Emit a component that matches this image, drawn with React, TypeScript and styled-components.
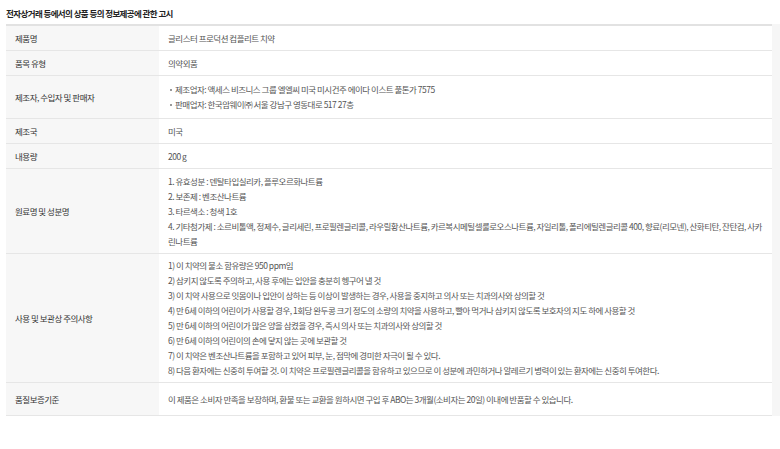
import React, { FC } from 'react';
import styled, { createGlobalStyle } from 'styled-components';

const GlobalStyle = createGlobalStyle`
  html, body {
    margin: 0;
    padding: 0;
    background: #fff;
  }
  body {
    font-family: 'Noto Sans CJK KR', 'Noto Sans', sans-serif;
    -webkit-font-smoothing: antialiased;
  }
`;

const Page = styled.div`
  width: 780px;
  height: 449px;
  padding: 6px 0 0 6px;
  box-sizing: border-box;
  overflow: hidden;
`;

const Title = styled.h3`
  margin: 0 0 4px;
  font-size: 8.5px;
  line-height: 14px;
  font-weight: 700;
  letter-spacing: -0.6px;
  color: #222;
`;

const Frame = styled.div`
  background: #f6f6f6;
  padding-right: 8px;
`;

const Table = styled.div`
  display: grid;
  grid-template-columns: 153px 1fr;
  background: #fff;
  border-top: 2px solid #e2e2e2;
`;

const Label = styled.div`
  display: flex;
  align-items: center;
  padding: 4px 0 4px 9px;
  background: #f7f7f7;
  border-bottom: 1px solid #e6e6e6;
  font-size: 8.5px;
  line-height: 15px;
  letter-spacing: -0.5px;
  color: #333;
`;

const Value = styled.div<{ $pad: number }>`
  display: flex;
  flex-direction: column;
  justify-content: center;
  padding: ${p => p.$pad}px 8px ${p => p.$pad}px 9px;
  border-bottom: 1px solid #e6e6e6;
  font-size: 8.5px;
  line-height: 15px;
  letter-spacing: -0.5px;
  color: #555;
  word-break: break-all;
`;

const Bullet = styled.div`
  position: relative;
  padding-left: 7px;

  &::before {
    content: '';
    position: absolute;
    left: 2px;
    top: 7px;
    width: 2px;
    height: 2px;
    border-radius: 50%;
    background: #777;
  }
`;

const Line = styled.div``;

type Row = { label: string; lines: string[]; bullets?: boolean; pad?: number };

const rows: Row[] = [
  { label: '제품명', lines: ['글리스터 프로덕션 컴플리트 치약'] },
  { label: '품목 유형', lines: ['의약외품'] },
  {
    label: '제조자, 수입자 및 판매자',
    bullets: true,
    pad: 6,
    lines: [
      '제조업자: 액세스 비즈니스 그룹 엘엘씨 미국 미시건주 에이다 이스트 풀톤가 7575',
      '판매업자: 한국암웨이㈜ 서울 강남구 영동대로 517 27층',
    ],
  },
  { label: '제조국', lines: ['미국'] },
  { label: '내용량', lines: ['200 g'] },
  {
    label: '원료명 및 성분명',
    lines: [
      '1. 유효성분 : 덴탈타입실리카, 플루오르화나트륨',
      '2. 보존제 : 벤조산나트륨',
      '3. 타르색소 : 청색 1호',
      '4. 기타첨가제 : 소르비톨액, 정제수, 글리세린, 프로필렌글리콜, 라우릴황산나트륨, 카르복시메틸셀룰로오스나트륨, 자일리톨, 폴리에틸렌글리콜 400, 향료(리모넨), 산화티탄, 잔탄검, 사카린나트륨',
    ],
  },
  {
    label: '사용 및 보관상 주의사항',
    pad: 4,
    lines: [
      '1) 이 치약의 불소 함유량은 950 ppm임',
      '2) 삼키지 않도록 주의하고, 사용 후에는 입안을 충분히 헹구어 낼 것',
      '3) 이 치약 사용으로 잇몸이나 입안이 상하는 등 이상이 발생하는 경우, 사용을 중지하고 의사 또는 치과의사와 상의할 것',
      '4) 만 6세 이하의 어린이가 사용할 경우, 1회당 완두콩 크기 정도의 소량의 치약을 사용하고, 빨아 먹거나 삼키지 않도록 보호자의 지도 하에 사용할 것',
      '5) 만 6세 이하의 어린이가 많은 양을 삼켰을 경우, 즉시 의사 또는 치과의사와 상의할 것',
      '6) 만 6세 이하의 어린이의 손에 닿지 않는 곳에 보관할 것',
      '7) 이 치약은 벤조산나트륨을 포함하고 있어 피부, 눈, 점막에 경미한 자극이 될 수 있다.',
      '8) 다음 환자에는 신중히 투여할 것. 이 치약은 프로필렌글리콜을 함유하고 있으므로 이 성분에 과민하거나 알레르기 병력이 있는 환자에는 신중히 투여한다.',
    ],
  },
  {
    label: '품질보증기준',
    pad: 8.5,
    lines: ['이 제품은 소비자 만족을 보장하며, 환불 또는 교환을 원하시면 구입 후 ABO는 3개월(소비자는 20일) 이내에 반품할 수 있습니다.'],
  },
];

const App: FC = () => (
  <>
    <GlobalStyle />
    <Page>
      <Title>전자상거래 등에서의 상품 등의 정보제공에 관한 고시</Title>
      <Frame>
        <Table>
          {rows.map(row => (
            <React.Fragment key={row.label}>
              <Label>{row.label}</Label>
              <Value $pad={row.pad ?? 4.5}>
                {row.lines.map(text =>
                  row.bullets ? <Bullet key={text}>{text}</Bullet> : <Line key={text}>{text}</Line>
                )}
              </Value>
            </React.Fragment>
          ))}
        </Table>
      </Frame>
    </Page>
  </>
);

export default App;
